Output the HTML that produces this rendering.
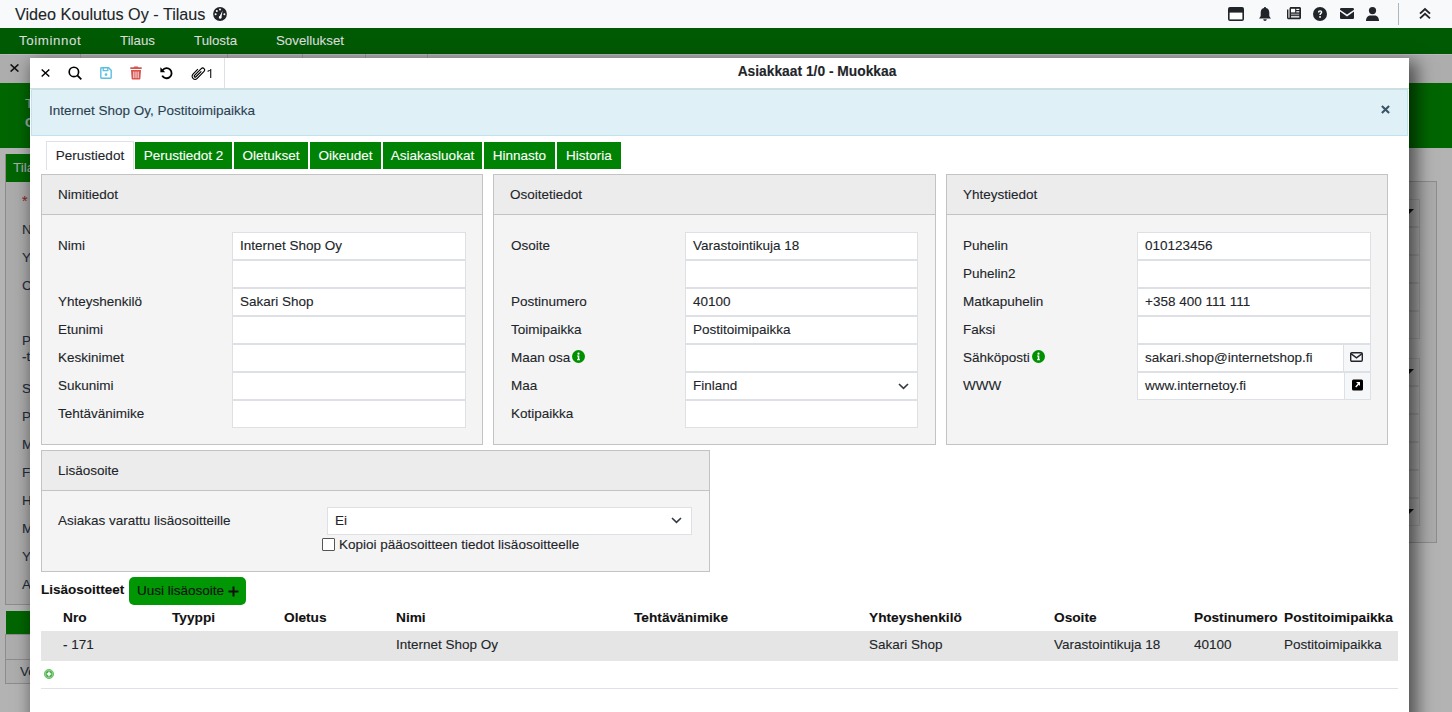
<!DOCTYPE html><html><head><meta charset="utf-8"><style>
*{box-sizing:border-box;margin:0;padding:0}
html,body{width:1452px;height:712px;overflow:hidden;background:#b3b3b3;font-family:"Liberation Sans",sans-serif;font-size:13.5px;color:#212529;-webkit-text-stroke:0.1px currentColor}
div,span{position:absolute;white-space:nowrap}
.t{line-height:16px}
.lbl{line-height:16px;color:#212529}
.inp{background:#fff;border:1px solid #dde1e6;height:28px}
.it{line-height:16px;color:#212529}
.panel{background:#f4f4f4;border:1px solid #c3c3c3}
.ph{background:#ececec;border-bottom:1px solid #c3c3c3}
.tab{height:27px;line-height:27px;color:#fff;background:#008204;text-align:center}
.th{font-weight:bold;line-height:16px;color:#111;font-size:13.7px}
.td{line-height:16px;color:#212529}
</style></head><body>
<div style="left:0;top:54px;width:1452px;height:29px;background:#adadad"></div>
<div style="left:0;top:54px;width:1452px;height:1px;background:#bdb8bd"></div>
<div style="left:80px;top:53px;width:1px;height:30px;background:#999"></div>
<div style="left:227px;top:53px;width:1px;height:30px;background:#999"></div>
<div style="left:302px;top:53px;width:1px;height:30px;background:#999"></div>
<div style="left:365px;top:53px;width:1px;height:30px;background:#999"></div>
<div style="left:427px;top:53px;width:1px;height:30px;background:#999"></div>
<svg style="position:absolute;left:10px;top:64px" width="9" height="8" viewBox="0 0 9 8"><path d="M.6 .4 L8.4 7.6 M8.4 .4 L.6 7.6" stroke="#111" stroke-width="1.5" fill="none"/></svg>
<div style="left:0;top:83px;width:1452px;height:65px;background:#006600"></div>
<div style="left:25px;top:96px;color:#9aa;font-size:13.5px">T</div>
<div style="left:25px;top:115px;color:#9aa;font-size:13.5px;font-weight:bold">C</div>
<div style="left:5px;top:154px;width:60px;height:451px;border:1px solid #8c8c8c;background:#ababab"></div>
<div style="left:6px;top:154px;width:60px;height:28px;background:#006600"></div>
<div style="left:13px;top:160px;color:#aab;font-size:13.5px">Tila</div>
<div style="left:22px;top:193px;color:#8a2a2a;font-size:14px">*</div>
<div style="left:22px;top:222px;color:#1f2d3d">N</div>
<div style="left:22px;top:250px;color:#1f2d3d">Y</div>
<div style="left:22px;top:278px;color:#1f2d3d">C</div>
<div style="left:22px;top:333px;color:#1f2d3d">P</div>
<div style="left:22px;top:349px;color:#1f2d3d">-t</div>
<div style="left:22px;top:381px;color:#1f2d3d">S</div>
<div style="left:22px;top:409px;color:#1f2d3d">P</div>
<div style="left:22px;top:437px;color:#1f2d3d">M</div>
<div style="left:22px;top:465px;color:#1f2d3d">F</div>
<div style="left:22px;top:493px;color:#1f2d3d">H</div>
<div style="left:22px;top:521px;color:#1f2d3d">M</div>
<div style="left:22px;top:549px;color:#1f2d3d">Y</div>
<div style="left:22px;top:577px;color:#1f2d3d">A</div>
<div style="left:6px;top:611px;width:40px;height:23px;background:#006600"></div>
<div style="left:5px;top:634px;width:40px;height:50px;border:1px solid #8c8c8c;background:#adadad"></div>
<div style="left:5px;top:659px;width:40px;height:1px;background:#8c8c8c"></div>
<div style="left:20px;top:664px;color:#1f2d3d">Ve</div>
<div style="left:1395px;top:181px;width:42px;height:362px;border-right:1px solid #8c8c8c;border-top:1px solid #8c8c8c;border-bottom:1px solid #8c8c8c;background:#aaaaaa"></div>
<div style="left:1395px;top:199px;width:25px;height:28px;border:1px solid #999;background:#a8a8a8"></div>
<div style="left:1395px;top:227px;width:25px;height:28px;border:1px solid #999;background:#a8a8a8"></div>
<div style="left:1395px;top:255px;width:25px;height:28px;border:1px solid #999;background:#a8a8a8"></div>
<div style="left:1395px;top:283px;width:25px;height:28px;border:1px solid #999;background:#a8a8a8"></div>
<div style="left:1395px;top:311px;width:25px;height:28px;border:1px solid #999;background:#a8a8a8"></div>
<div style="left:1395px;top:358px;width:25px;height:28px;border:1px solid #999;background:#a8a8a8"></div>
<div style="left:1395px;top:386px;width:25px;height:28px;border:1px solid #999;background:#a8a8a8"></div>
<div style="left:1395px;top:414px;width:25px;height:28px;border:1px solid #999;background:#a8a8a8"></div>
<div style="left:1395px;top:442px;width:25px;height:28px;border:1px solid #999;background:#a8a8a8"></div>
<div style="left:1395px;top:470px;width:25px;height:28px;border:1px solid #999;background:#a8a8a8"></div>
<div style="left:1395px;top:498px;width:25px;height:28px;border:1px solid #999;background:#a8a8a8"></div>
<svg style="position:absolute;left:1409px;top:209px" width="5" height="5" viewBox="0 0 5 5"><path d="M0 0 L5 0 L0 5 Z" fill="#111"/></svg>
<svg style="position:absolute;left:1409px;top:369px" width="5" height="5" viewBox="0 0 5 5"><path d="M0 0 L5 0 L0 5 Z" fill="#111"/></svg>
<svg style="position:absolute;left:1409px;top:509px" width="5" height="5" viewBox="0 0 5 5"><path d="M0 0 L5 0 L0 5 Z" fill="#111"/></svg>
<div style="left:0;top:0;width:1452px;height:28px;background:#f8f9fa"></div>
<div style="left:15px;top:5px;font-size:16.2px;line-height:19px;color:#212529">Video Koulutus Oy - Tilaus</div>
<div style="left:0;top:28px;width:1452px;height:26px;background:#005a03"></div>
<div style="left:19px;top:33px;line-height:16px;color:#dcdcdc;font-size:13.3px;letter-spacing:0.6px">Toiminnot</div>
<div style="left:120px;top:33px;line-height:16px;color:#dcdcdc;font-size:13.3px;letter-spacing:0px">Tilaus</div>
<div style="left:194px;top:33px;line-height:16px;color:#dcdcdc;font-size:13.3px;letter-spacing:0px">Tulosta</div>
<div style="left:276px;top:33px;line-height:16px;color:#dcdcdc;font-size:13.3px;letter-spacing:0px">Sovellukset</div>
<div style="left:30px;top:58px;width:1379px;height:700px;background:#fff;box-shadow:5px 7px 16px 3px rgba(0,0,0,.55)"></div>
<div style="left:224px;top:58px;width:1px;height:30px;background:#dee2e6"></div>
<div style="left:30px;top:88px;width:1379px;height:1px;background:#d9d9d9"></div>
<div style="left:225px;top:64px;width:1184px;text-align:center;font-weight:bold;font-size:13.8px;line-height:16px;color:#212529">Asiakkaat 1/0 - Muokkaa</div>
<div style="left:31px;top:89px;width:1377px;height:47px;background:#dff0f7;border:1px solid #bfe4f0"></div>
<div style="left:49px;top:103px;line-height:16px;color:#2b3f4f">Internet Shop Oy, Postitoimipaikka</div>
<div style="left:46px;top:141px;width:88px;height:29px;background:#fff;border:1px solid #dee2e6;border-bottom:none;line-height:27px;text-align:center;color:#212529">Perustiedot</div>
<div class="tab" style="left:135px;top:142px;width:97px">Perustiedot 2</div>
<div class="tab" style="left:234px;top:142px;width:74px">Oletukset</div>
<div class="tab" style="left:310px;top:142px;width:71px">Oikeudet</div>
<div class="tab" style="left:383px;top:142px;width:99px">Asiakasluokat</div>
<div class="tab" style="left:484px;top:142px;width:71px">Hinnasto</div>
<div class="tab" style="left:557px;top:142px;width:64px">Historia</div>
<div class="panel" style="left:41px;top:174px;width:442px;height:271px"></div>
<div class="ph" style="left:42px;top:175px;width:440px;height:40px"></div>
<div class="t" style="left:58px;top:187px">Nimitiedot</div>
<div class="panel" style="left:493px;top:174px;width:443px;height:271px"></div>
<div class="ph" style="left:494px;top:175px;width:441px;height:40px"></div>
<div class="t" style="left:510px;top:187px">Osoitetiedot</div>
<div class="panel" style="left:946px;top:174px;width:442px;height:271px"></div>
<div class="ph" style="left:947px;top:175px;width:440px;height:40px"></div>
<div class="t" style="left:963px;top:187px">Yhteystiedot</div>
<div class="lbl" style="left:58px;top:238px">Nimi</div>
<div class="inp" style="left:232px;top:232px;width:234px"></div>
<div class="it" style="left:240px;top:238px">Internet Shop Oy</div>
<div class="inp" style="left:232px;top:260px;width:234px"></div>
<div class="lbl" style="left:58px;top:294px">Yhteyshenkilö</div>
<div class="inp" style="left:232px;top:288px;width:234px"></div>
<div class="it" style="left:240px;top:294px">Sakari Shop</div>
<div class="lbl" style="left:58px;top:322px">Etunimi</div>
<div class="inp" style="left:232px;top:316px;width:234px"></div>
<div class="lbl" style="left:58px;top:350px">Keskinimet</div>
<div class="inp" style="left:232px;top:344px;width:234px"></div>
<div class="lbl" style="left:58px;top:378px">Sukunimi</div>
<div class="inp" style="left:232px;top:372px;width:234px"></div>
<div class="lbl" style="left:58px;top:406px">Tehtävänimike</div>
<div class="inp" style="left:232px;top:400px;width:234px"></div>
<div class="lbl" style="left:511px;top:238px">Osoite</div>
<div class="inp" style="left:685px;top:232px;width:233px"></div>
<div class="it" style="left:693px;top:238px">Varastointikuja 18</div>
<div class="inp" style="left:685px;top:260px;width:233px"></div>
<div class="lbl" style="left:511px;top:294px">Postinumero</div>
<div class="inp" style="left:685px;top:288px;width:233px"></div>
<div class="it" style="left:693px;top:294px">40100</div>
<div class="lbl" style="left:511px;top:322px">Toimipaikka</div>
<div class="inp" style="left:685px;top:316px;width:233px"></div>
<div class="it" style="left:693px;top:322px">Postitoimipaikka</div>
<div class="lbl" style="left:511px;top:350px">Maan osa</div>
<div class="inp" style="left:685px;top:344px;width:233px"></div>
<div class="lbl" style="left:511px;top:378px">Maa</div>
<div class="inp" style="left:685px;top:372px;width:233px"></div>
<div class="it" style="left:693px;top:378px">Finland</div>
<div class="lbl" style="left:511px;top:406px">Kotipaikka</div>
<div class="inp" style="left:685px;top:400px;width:233px"></div>
<div class="lbl" style="left:963px;top:238px">Puhelin</div>
<div class="inp" style="left:1137px;top:232px;width:234px"></div>
<div class="it" style="left:1145px;top:238px">010123456</div>
<div class="lbl" style="left:963px;top:266px">Puhelin2</div>
<div class="inp" style="left:1137px;top:260px;width:234px"></div>
<div class="lbl" style="left:963px;top:294px">Matkapuhelin</div>
<div class="inp" style="left:1137px;top:288px;width:234px"></div>
<div class="it" style="left:1145px;top:294px">+358 400 111 111</div>
<div class="lbl" style="left:963px;top:322px">Faksi</div>
<div class="inp" style="left:1137px;top:316px;width:234px"></div>
<div class="lbl" style="left:963px;top:350px">Sähköposti</div>
<div class="inp" style="left:1137px;top:344px;width:234px"></div>
<div class="it" style="left:1145px;top:350px">sakari.shop@internetshop.fi</div>
<div class="lbl" style="left:963px;top:378px">WWW</div>
<div class="inp" style="left:1137px;top:372px;width:234px"></div>
<div class="it" style="left:1145px;top:378px">www.internetoy.fi</div>
<div class="panel" style="left:41px;top:450px;width:669px;height:122px"></div>
<div class="ph" style="left:42px;top:451px;width:667px;height:40px"></div>
<div class="t" style="left:58px;top:463px">Lisäosoite</div>
<div class="lbl" style="left:58px;top:513px">Asiakas varattu lisäosoitteille</div>
<div class="inp" style="left:327px;top:507px;width:365px"></div>
<div class="it" style="left:335px;top:513px">Ei</div>
<div style="left:322px;top:538px;width:13px;height:13px;border:1px solid #555;background:#fff;border-radius:1px"></div>
<div class="lbl" style="left:339px;top:537px">Kopioi pääosoitteen tiedot lisäosoitteelle</div>
<div class="t" style="left:41px;top:582px;font-weight:bold;color:#111">Lisäosoitteet</div>
<div style="left:129px;top:577px;width:117px;height:28px;background:#009604;border-radius:5px"></div>
<div class="t" style="left:137px;top:583px;color:#111">Uusi lisäosoite</div>
<div class="th" style="left:63px;top:610px">Nro</div>
<div class="th" style="left:172px;top:610px">Tyyppi</div>
<div class="th" style="left:284px;top:610px">Oletus</div>
<div class="th" style="left:396px;top:610px">Nimi</div>
<div class="th" style="left:634px;top:610px">Tehtävänimike</div>
<div class="th" style="left:869px;top:610px">Yhteyshenkilö</div>
<div class="th" style="left:1054px;top:610px">Osoite</div>
<div class="th" style="left:1194px;top:610px">Postinumero</div>
<div class="th" style="left:1284px;top:610px">Postitoimipaikka</div>
<div style="left:41px;top:631px;width:1357px;height:30px;background:#e5e5e5"></div>
<div class="td" style="left:63px;top:637px">- 171</div>
<div class="td" style="left:396px;top:637px">Internet Shop Oy</div>
<div class="td" style="left:869px;top:637px">Sakari Shop</div>
<div class="td" style="left:1054px;top:637px">Varastointikuja 18</div>
<div class="td" style="left:1194px;top:637px">40100</div>
<div class="td" style="left:1284px;top:637px">Postitoimipaikka</div>
<div style="left:41px;top:688px;width:1357px;height:1px;background:#dee2e6"></div>
<svg style="position:absolute;left:213px;top:7px;overflow:visible" width="14" height="14" viewBox="0 0 14 14"><circle cx="7" cy="7" r="6.9" fill="#212529"/><circle cx="7" cy="2.6" r="1" fill="#fff"/><circle cx="3.8" cy="4" r="1" fill="#fff"/><circle cx="2.6" cy="7.3" r="1" fill="#fff"/><circle cx="11.4" cy="7.3" r="1" fill="#fff"/><path d="M6 10.6 L9.6 3.6 L8.4 10.6 Z" fill="#fff"/><circle cx="7.2" cy="10.4" r="1.3" fill="#fff"/></svg>
<svg style="position:absolute;left:1228px;top:7px;overflow:visible" width="16" height="14" viewBox="0 0 16 14"><rect x="0" y="0" width="16" height="14" rx="2" fill="#212529"/><rect x="1.6" y="5.6" width="12.8" height="6.8" fill="#fff"/></svg>
<svg style="position:absolute;left:1259px;top:7px;overflow:visible" width="12" height="14" viewBox="0 0 12 14"><path d="M6 0 C6.6 0 7 .4 7 1 C9.2 1.5 10.3 3.3 10.3 5.6 L10.3 8.6 C10.3 9.6 11.2 10.6 12 11.6 L0 11.6 C.8 10.6 1.7 9.6 1.7 8.6 L1.7 5.6 C1.7 3.3 2.8 1.5 5 1 C5 .4 5.4 0 6 0 Z M4.3 12.3 L7.7 12.3 C7.7 13.3 6.9 14 6 14 C5.1 14 4.3 13.3 4.3 12.3 Z" fill="#212529"/></svg>
<svg style="position:absolute;left:1287px;top:7px;overflow:visible" width="14" height="13" viewBox="0 0 14 13"><path d="M2.5 1.5 C2.5 .7 3.2 0 4 0 L12.5 0 C13.3 0 14 .7 14 1.5 L14 10.8 C14 11.6 13.3 12.3 12.5 12.3 L1.5 12.3 C.7 12.3 0 11.6 0 10.8 L0 2.5 L1.4 2.5 L1.4 10.8 L2.5 10.8 Z" fill="#212529"/><rect x="4" y="1.8" width="4.2" height="3.6" fill="#fff"/><rect x="9.3" y="1.8" width="3" height="1.2" fill="#fff"/><rect x="9.3" y="4.2" width="3" height="1.2" fill="#fff"/><rect x="4" y="6.5" width="8.3" height="1.8" fill="#8a8a8a"/><rect x="4" y="9.2" width="8.3" height="1.3" fill="#fff"/></svg>
<svg style="position:absolute;left:1313px;top:7px;overflow:visible" width="14" height="14" viewBox="0 0 14 14"><circle cx="7" cy="7" r="7" fill="#212529"/><path d="M4.9 5.4 C4.9 4.1 5.8 3.3 7.1 3.3 C8.4 3.3 9.3 4.1 9.3 5.2 C9.3 6.6 7.8 6.8 7.8 8.1 L6.3 8.1 C6.3 6.3 7.8 6.1 7.8 5.3 C7.8 4.9 7.5 4.6 7.1 4.6 C6.6 4.6 6.4 5 6.4 5.4 Z" fill="#fff"/><circle cx="7.05" cy="9.9" r=".95" fill="#fff"/></svg>
<svg style="position:absolute;left:1340px;top:8px;overflow:visible" width="14" height="11" viewBox="0 0 14 11"><path d="M1.3 0 L12.7 0 C13.4 0 14 .6 14 1.3 L14 1.8 L7 6.6 L0 1.8 L0 1.3 C0 .6 .6 0 1.3 0 Z M0 3.6 L7 8.4 L14 3.6 L14 9.7 C14 10.4 13.4 11 12.7 11 L1.3 11 C.6 11 0 10.4 0 9.7 Z" fill="#212529"/></svg>
<svg style="position:absolute;left:1366px;top:7px;overflow:visible" width="13" height="14" viewBox="0 0 13 14"><circle cx="6.5" cy="3.6" r="3.6" fill="#212529"/><path d="M0 14 C0 10.2 2.4 8.5 4.4 8.5 L8.6 8.5 C10.6 8.5 13 10.2 13 14 Z" fill="#212529"/></svg>
<div style="left:1398px;top:3px;width:1px;height:22px;background:#adb5bd"></div>
<svg style="position:absolute;left:1419px;top:8px;overflow:visible" width="12" height="11" viewBox="0 0 12 11"><path d="M1 5.6 L6 1 L11 5.6 M1 10.4 L6 5.8 L11 10.4" fill="none" stroke="#212529" stroke-width="1.9"/></svg>
<svg style="position:absolute;left:41px;top:69px;overflow:visible" width="9" height="8" viewBox="0 0 9 8"><path d="M.7 .5 L8.3 7.5 M8.3 .5 L.7 7.5" stroke="#000" stroke-width="1.45" fill="none"/></svg>
<svg style="position:absolute;left:68px;top:66px;overflow:visible" width="14" height="14" viewBox="0 0 14 14"><circle cx="5.9" cy="5.9" r="4.7" stroke="#000" stroke-width="1.65" fill="none"/><path d="M9.3 9.3 L13.3 13.3" stroke="#000" stroke-width="1.8" fill="none"/></svg>
<svg style="position:absolute;left:100px;top:67px;overflow:visible" width="12" height="12" viewBox="0 0 12 12"><path d="M1.5 .8 L8.6 .8 L11.2 3.4 L11.2 10.5 C11.2 10.9 10.9 11.2 10.5 11.2 L1.5 11.2 C1.1 11.2 .8 10.9 .8 10.5 L.8 1.5 C.8 1.1 1.1 .8 1.5 .8 Z" stroke="#5bc0de" stroke-width="1.4" fill="none"/><path d="M3.2 1 L3.2 3.6 L7.8 3.6 L7.8 1" stroke="#5bc0de" stroke-width="1.3" fill="none"/><circle cx="6" cy="7.6" r="1.3" fill="#5bc0de"/></svg>
<svg style="position:absolute;left:130px;top:66px;overflow:visible" width="12" height="14" viewBox="0 0 12 14"><path d="M4.2 .4 L7.8 .4 L8.3 1.3 L11.7 1.3 L11.7 2.9 L.3 2.9 L.3 1.3 L3.7 1.3 Z" fill="#d9534f"/><path d="M1 4 L11 4 L10.4 12.6 C10.35 13.2 9.9 13.6 9.3 13.6 L2.7 13.6 C2.1 13.6 1.65 13.2 1.6 12.6 Z" fill="#d9534f"/><rect x="3.4" y="5.6" width=".9" height="6.4" fill="#fff"/><rect x="5.55" y="5.6" width=".9" height="6.4" fill="#fff"/><rect x="7.7" y="5.6" width=".9" height="6.4" fill="#fff"/></svg>
<svg style="position:absolute;left:160px;top:67px;overflow:visible" width="13" height="12" viewBox="0 0 13 12"><path d="M2.6 3.2 A5 5 0 1 1 2.2 8.6" stroke="#000" stroke-width="1.8" fill="none"/><path d="M0.4 0.2 L0.4 5.2 L5.2 5.2 Z" fill="#000"/></svg>
<svg style="position:absolute;left:192px;top:66px;overflow:visible" width="13" height="14" viewBox="0 0 13 14"><path d="M1.1 -3.5 L1.1 5 A1.1 1.1 0 0 1 -1.1 5 L-1.1 -5.6 A2.2 2.2 0 0 1 3.3 -5.6 L3.3 5.2 A3.3 3.3 0 0 1 -3.3 5.2 L-3.3 -2.5" stroke="#000" stroke-width="1.3" fill="none" transform="translate(6.4,6.9) rotate(45) scale(.9)"/></svg>
<svg style="position:absolute;left:207px;top:69px;overflow:visible" width="5" height="9" viewBox="0 0 5 9"><path d="M3.7 0 L3.7 9 M3.7 .6 L.6 2.6" stroke="#212529" stroke-width="1.2" fill="none"/></svg>
<svg style="position:absolute;left:1381px;top:105px;overflow:visible" width="9" height="9" viewBox="0 0 9 9"><path d="M.9 .9 L8.1 8.1 M8.1 .9 L.9 8.1" stroke="#3a5566" stroke-width="2.1" fill="none"/></svg>
<svg style="position:absolute;left:572.0px;top:350.0px;overflow:visible" width="13" height="13" viewBox="0 0 13 13"><circle cx="6.5" cy="6.5" r="6.5" fill="#009000"/><circle cx="6.5" cy="3.7" r="1.1" fill="#fff"/><path d="M5 5.6 L7.3 5.6 L7.3 9.2 L8 9.2 L8 10.2 L5 10.2 L5 9.2 L5.8 9.2 L5.8 6.6 L5 6.6 Z" fill="#fff"/></svg>
<svg style="position:absolute;left:1032.1px;top:350.2px;overflow:visible" width="13" height="13" viewBox="0 0 13 13"><circle cx="6.5" cy="6.5" r="6.5" fill="#009000"/><circle cx="6.5" cy="3.7" r="1.1" fill="#fff"/><path d="M5 5.6 L7.3 5.6 L7.3 9.2 L8 9.2 L8 10.2 L5 10.2 L5 9.2 L5.8 9.2 L5.8 6.6 L5 6.6 Z" fill="#fff"/></svg>
<svg style="position:absolute;left:897.5px;top:382.5px;overflow:visible" width="11" height="7" viewBox="0 0 11 7"><path d="M1 1 L5.5 5.3 L10 1" stroke="#343a40" stroke-width="1.6" fill="none"/></svg>
<svg style="position:absolute;left:671px;top:517px;overflow:visible" width="11" height="7" viewBox="0 0 11 7"><path d="M1 1 L5.5 5.3 L10 1" stroke="#343a40" stroke-width="1.6" fill="none"/></svg>
<div style="left:1343px;top:344px;width:28px;height:28px;background:#f6f7f9;border:1px solid #dde1e6"></div>
<div style="left:1344px;top:372px;width:27px;height:28px;background:#f6f7f9;border:1px solid #dde1e6"></div>
<svg style="position:absolute;left:1350px;top:352px;overflow:visible" width="13" height="10" viewBox="0 0 13 10"><rect x=".7" y=".7" width="11.6" height="8.6" rx="1.2" stroke="#212529" stroke-width="1.4" fill="none"/><path d="M.9 1.6 L6.5 5.8 L12.1 1.6" stroke="#212529" stroke-width="1.4" fill="none"/></svg>
<svg style="position:absolute;left:1352px;top:379px;overflow:visible" width="11" height="12" viewBox="0 0 11 12"><rect x="0" y=".5" width="11" height="11" rx="1.5" fill="#000"/><path d="M4 3 L8 3 L8 7 L6.8 5.8 L4.2 8.4 L3.2 7.4 L5.8 4.8 Z" fill="#fff"/></svg>
<svg style="position:absolute;left:228px;top:586px;overflow:visible" width="11" height="11" viewBox="0 0 11 11"><path d="M5.5 .5 L5.5 10.5 M.5 5.5 L10.5 5.5" stroke="#111" stroke-width="2" fill="none"/></svg>
<svg style="position:absolute;left:44px;top:669px;overflow:visible" width="10" height="10" viewBox="0 0 10 10"><circle cx="5" cy="5" r="4.6" fill="#8fd18f" stroke="#5cb85c" stroke-width=".8"/><circle cx="5" cy="5" r="3.2" fill="#4cae4c"/><path d="M5 2.8 L5 7.2 M2.8 5 L7.2 5" stroke="#fff" stroke-width="1.5"/></svg>
</body></html>
